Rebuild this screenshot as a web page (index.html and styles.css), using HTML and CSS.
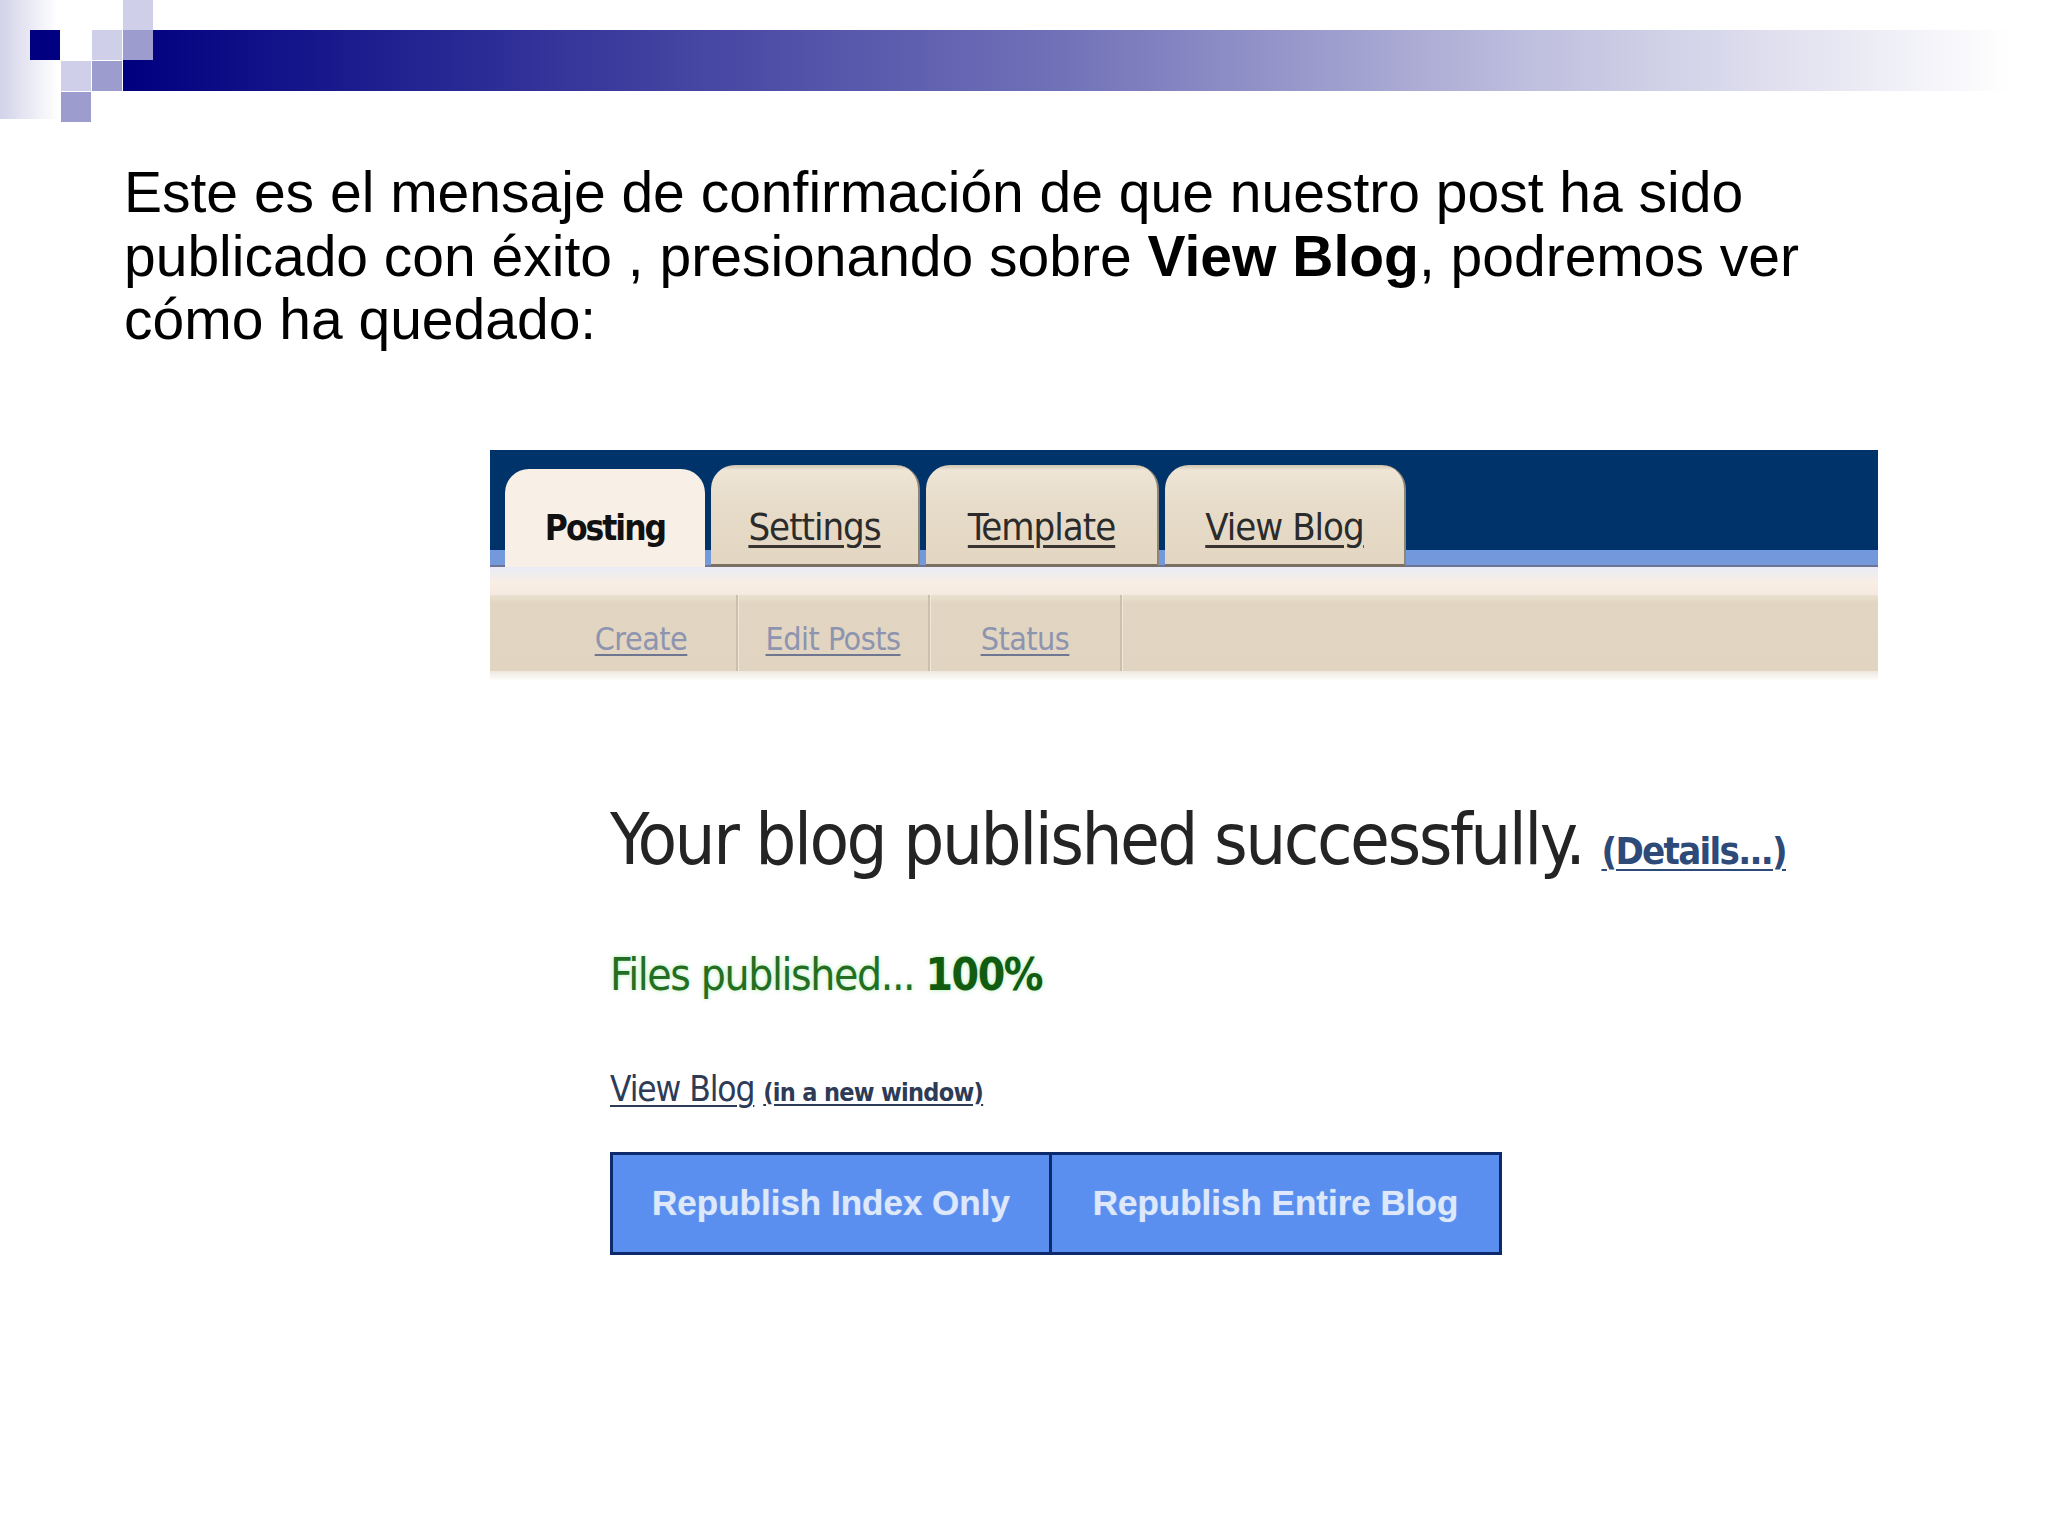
FILE: index.html
```html
<!DOCTYPE html>
<html lang="es">
<head>
<meta charset="utf-8">
<title>Blog publicado</title>
<link rel="stylesheet" href="styles.css">
</head>
<body>
<div class="slide">
  <svg class="deco" width="2048" height="122" viewBox="0 0 2048 122" aria-hidden="true">
    <defs>
      <linearGradient id="side" x1="0" y1="0" x2="1" y2="0">
        <stop offset="0" stop-color="#d2d2e9"/>
        <stop offset="1" stop-color="#ffffff"/>
      </linearGradient>
      <linearGradient id="bar" gradientUnits="userSpaceOnUse" x1="123" y1="0" x2="2012" y2="0">
        <stop offset="0" stop-color="#000080"/>
        <stop offset="0.5" stop-color="#7272b9"/>
        <stop offset="0.75" stop-color="#c0c0df"/>
        <stop offset="1" stop-color="#ffffff"/>
      </linearGradient>
    </defs>
    <rect x="0" y="0" width="58" height="119" fill="url(#side)"/>
    <rect x="123" y="30" width="1890" height="61" fill="url(#bar)"/>
    <rect x="30" y="30" width="30" height="30" fill="#000080"/>
    <rect x="123" y="0" width="30" height="30" fill="#cfcfe9"/>
    <rect x="92" y="30" width="30" height="30" fill="#cfcfe9"/>
    <rect x="61" y="61" width="30" height="30" fill="#cfcfe9"/>
    <rect x="123" y="30" width="30" height="30" fill="#9c9ccf"/>
    <rect x="92" y="61" width="30" height="30" fill="#9c9ccf"/>
    <rect x="61" y="92" width="30" height="30" fill="#9c9ccf"/>
  </svg>

  <p class="intro">Este es el mensaje de confirmación de que nuestro post ha sido publicado con éxito , presionando sobre <b>View Blog</b>, podremos ver cómo ha quedado:</p>

  <div class="shot">
    <div class="tabbar">
      <div class="tab active"><span>Posting</span></div>
      <div class="tab t-settings"><span>Settings</span></div>
      <div class="tab t-template"><span>Template</span></div>
      <div class="tab t-view"><span>View Blog</span></div>
    </div>
    <div class="strip"></div>
    <div class="subnav">
      <div class="subitem"><span>Create</span></div>
      <div class="subitem"><span>Edit Posts</span></div>
      <div class="subitem"><span>Status</span></div>
    </div>
    <div class="fade"></div>
    <div class="shot-body">
      <h1 class="done">Your blog published successfully. <a class="details">(Details...)</a></h1>
      <p class="files">Files published... <b>100%</b></p>
      <p class="viewlink"><a class="vb">View Blog</a> <a class="nw">(in a new window)</a></p>
      <div class="buttons">
        <div class="btn b1">Republish Index Only</div>
        <div class="btn b2">Republish Entire Blog</div>
      </div>
    </div>
  </div>
</div>
</body>
</html>
```
FILE: styles.css
```css
html, body {
  margin: 0;
  padding: 0;
  background: #ffffff;
}

.slide {
  width: 2048px;
  height: 1536px;
  overflow: hidden;
  display: flex;
  flex-direction: column;
  font-family: "Liberation Sans", Arial, sans-serif;
}

.deco {
  display: block;
  flex: none;
}

.intro {
  margin: 39px 0 0 124px;
  width: 1760px;
  font-size: 57px;
  line-height: 63.5px;
  color: #000;
}

.intro b { font-weight: bold; }

/* embedded screenshot */
.shot {
  margin: 98px 0 0 490px;
  width: 1388px;
  display: flex;
  flex-direction: column;
}

.tab, .subitem, .done, .files, .viewlink {
  font-family: "Liberation Sans Narrow", "Arial Narrow", "DejaVu Sans Condensed", "DejaVu Sans", sans-serif;
  font-stretch: condensed;
}

.tabbar {
  height: 117px;
  box-sizing: border-box;
  padding-left: 15px;
  display: flex;
  align-items: flex-end;
  gap: 6px;
  background: linear-gradient(to bottom,
      #00336a 0, #00336a 100px,
      #7199dd 100px, #7599db 115px,
      #6d7494 115px, #6d7494 117px);
}

.tab {
  box-sizing: border-box;
  display: flex;
  align-items: flex-end;
  justify-content: center;
  border-radius: 24px 24px 0 0;
  font-size: 38px;
  line-height: 38px;
  letter-spacing: -1px;
  color: #2b2b2b;
  height: 102px;
  padding-bottom: 18px;
  background: linear-gradient(to bottom, #cfc3ae 0, #eee5d6 5px, #e7dcc9 40%, #e3d7c3 100%);
  border-bottom: 3px solid #7b7162;
  border-right: 2px solid #8f8575;
}

.tab span {
  text-decoration: underline;
  text-decoration-thickness: 3px;
  text-underline-offset: 5px;
  text-decoration-color: #3a3530;
}

.tab.active {
  width: 200px;
  height: 98px;
  padding-bottom: 21px;
  font-size: 35px;
  line-height: 35px;
  letter-spacing: -2px;
  font-weight: bold;
  color: #111;
  background: #f8f0e6;
  border: none;
}

.tab.active span { text-decoration: none; }

.t-settings { width: 209px; }
.t-template { width: 233px; }
.t-view { width: 241px; }

.strip {
  height: 28px;
  background: linear-gradient(to bottom, #e8ecf7 0, #f8eee4 55%, #f5eadf 100%);
}

.subnav {
  height: 76px;
  display: flex;
  padding-left: 56px;
  background: linear-gradient(to bottom, #ebe1d1 0, #e2d6c2 8px, #e1d5c1 100%);
}

.subitem {
  width: 192px;
  box-sizing: border-box;
  padding-top: 12px;
  display: flex;
  justify-content: center;
  font-size: 32px;
  line-height: 64px;
  letter-spacing: -0.5px;
  color: #8d94af;
  border-right: 2px solid #cdbfa9;
  box-shadow: 1px 0 0 #f0e8db;
}

.subitem span {
  text-decoration: underline;
  text-decoration-thickness: 2px;
  text-underline-offset: 4px;
  text-decoration-color: #6f7692;
}

.fade {
  height: 10px;
  background: linear-gradient(to bottom, #ede7dd, #ffffff);
}

.shot-body {
  padding: 118px 0 0 120px;
  display: flex;
  flex-direction: column;
  align-items: flex-start;
}

.done {
  margin: 0;
  white-space: nowrap;
  font-size: 72px;
  line-height: 80px;
  letter-spacing: -2.5px;
  font-weight: normal;
  color: #242424;
}

.details {
  font-size: 38px;
  letter-spacing: -1.7px;
  font-weight: bold;
  color: #2e4a78;
  text-decoration: underline;
  text-decoration-thickness: 2px;
  text-underline-offset: 5px;
}

.files {
  margin: 59px 0 0 0;
  font-size: 44px;
  line-height: 50px;
  letter-spacing: -1.4px;
  color: #236e23;
  text-shadow: 0 0 4px rgba(110, 220, 110, 0.55);
}

.files b { color: #125c12; }

.viewlink {
  margin: 70px 0 0 0;
  font-size: 35px;
  line-height: 38px;
  letter-spacing: -1.1px;
  color: #2d3b57;
}

.vb {
  text-decoration: underline;
  text-decoration-thickness: 2px;
  text-underline-offset: 4px;
}

.nw {
  font-size: 25px;
  letter-spacing: -0.7px;
  font-weight: bold;
  text-decoration: underline;
  text-decoration-thickness: 2px;
  text-underline-offset: 3px;
}

.buttons {
  margin-top: 40px;
  display: flex;
  height: 103px;
  border: 3px solid #0d2a6c;
  box-sizing: border-box;
  background: #5b8fef;
}

.btn {
  display: flex;
  align-items: center;
  justify-content: center;
  font-family: "Liberation Sans", Arial, sans-serif;
  font-weight: bold;
  font-size: 35px;
  color: #dde8fb;
  text-shadow: 0 0 1px #a9c4f5;
}

.b1 {
  width: 436px;
  border-right: 3px solid #0d2a6c;
}

.b2 { width: 447px; }
```
